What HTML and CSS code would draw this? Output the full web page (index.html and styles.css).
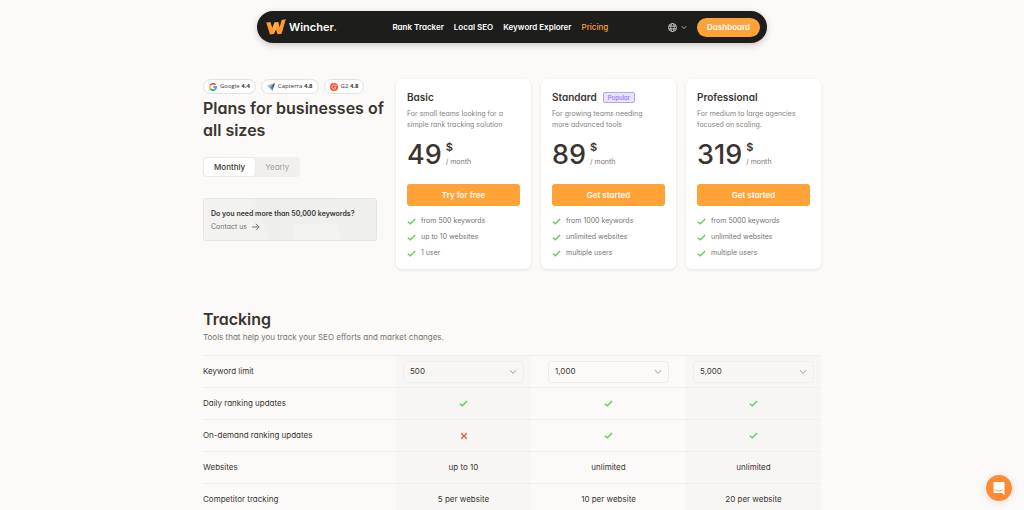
FILE: index.html
```
<!DOCTYPE html>
<html lang="en">
<head>
  <meta charset="UTF-8">
  <meta name="viewport" content="width=device-width, initial-scale=1.0">
  <title>Pricing - Wincher</title>
  <link rel="stylesheet" href="styles.css">
</head>
<body>

<!-- Shared icons -->
<svg class="sprite" aria-hidden="true">
  <symbol id="check" viewBox="0 0 10 8">
    <path d="M.8 4.2 3.6 6.6 9.2 1.2" fill="none" stroke="currentColor" stroke-width="1.6"/>
  </symbol>
  <symbol id="cross" viewBox="0 0 8 8">
    <path d="M1.2 1.2 6.8 6.8M6.8 1.2 1.2 6.8" fill="none" stroke="currentColor" stroke-width="1.4"/>
  </symbol>
  <symbol id="chevron" viewBox="0 0 8 6">
    <path d="M1 1.2 4 4.4 7 1.2" fill="none" stroke="currentColor" stroke-width="1"/>
  </symbol>
</svg>

<header class="navbar">
  <a class="logo" href="#" aria-label="Wincher">
    <svg width="20" height="16" viewBox="0 0 20 16" aria-hidden="true">
      <path d="M.2 3.4 4.4 3 6.4 9 8.6 3.6 12.4 3.2 13.6 8.4 15.6 1 19.8.2 15.6 14.8 11.6 15.2 10 10.6 7.8 15 4 15.4z" fill="#ff9a2e"/>
      <path d="M8.6 3.6 12.4 3.2 7.8 15 6.4 9z" fill="#ffab48"/>
    </svg>
    <span class="logo-text">Wincher<span class="dot">.</span></span>
  </a>
  <nav class="menu">
    <a href="#">Rank Tracker</a>
    <a href="#">Local SEO</a>
    <a href="#">Keyword Explorer</a>
    <a href="#" class="active">Pricing</a>
  </nav>
  <div class="nav-right">
    <button class="language" type="button" aria-label="Language">
      <svg width="9" height="9" viewBox="0 0 9 9" fill="none" stroke="currentColor" stroke-width=".8" aria-hidden="true">
        <circle cx="4.5" cy="4.5" r="4"/>
        <ellipse cx="4.5" cy="4.5" rx="1.8" ry="4"/>
        <path d="M.7 3.2H8.3M.7 5.8H8.3"/>
      </svg>
      <svg width="6" height="5" aria-hidden="true"><use href="#chevron"/></svg>
    </button>
    <a class="dashboard" href="#">Dashboard</a>
  </div>
</header>

<main class="container">
  <section class="plans">
    <div class="intro">
      <div class="ratings">
        <a class="rating" href="#">
          <svg width="8" height="8" viewBox="0 0 16 16" fill="none" stroke-width="3.2" aria-hidden="true">
            <path d="M13 3.6A6.4 6.4 0 0 0 2.6 4.6" stroke="#ea4335"/>
            <path d="M2.6 4.6A6.4 6.4 0 0 0 2.6 11.4" stroke="#fbbc05"/>
            <path d="M2.6 11.4A6.4 6.4 0 0 0 12.4 12.6" stroke="#34a853"/>
            <path d="M12.4 12.6A6.4 6.4 0 0 0 14.4 8H8.4" stroke="#4285f4"/>
          </svg>
          <span>Google <b>4.4</b></span>
        </a>
        <a class="rating" href="#">
          <svg width="8" height="8" viewBox="0 0 16 16" aria-hidden="true">
            <path d="M0 5 10.6 4.2 16 0z" fill="#ff9d28"/>
            <path d="M0 5 10.6 4.2V16z" fill="#68c5ed"/>
            <path d="M16 0 10.6 16V4.2z" fill="#044d80"/>
            <path d="M7.4 8.6 10.6 4.2 9 12.6z" fill="#e54747"/>
          </svg>
          <span>Capterra <b>4.8</b></span>
        </a>
        <a class="rating" href="#">
          <svg width="8" height="8" viewBox="0 0 16 16" aria-hidden="true">
            <circle cx="8" cy="8" r="8" fill="#ff492c"/>
            <path d="M10.4 4.6A4.2 4.2 0 1 0 11.6 10.2L10.6 8.4H8" fill="none" stroke="#fff" stroke-width="1.6"/>
            <path d="M11 3.6h2L11 6.2h2.2" fill="none" stroke="#fff" stroke-width=".9"/>
          </svg>
          <span>G2 <b>4.8</b></span>
        </a>
      </div>
      <h1>Plans for businesses of all sizes</h1>
      <div class="period">
        <button type="button" class="selected">Monthly</button>
        <button type="button">Yearly</button>
      </div>
      <div class="more">
        <svg class="more-art" viewBox="0 0 174 43" preserveAspectRatio="none" aria-hidden="true">
          <path d="M0 0H50L66 43H0z" fill="#f2f2f1"/>
          <path d="M90 43V29q0-3 3-3h38q3 0 4 3l4 14z" fill="#f3f3f2"/>
        </svg>
        <p>Do you need more than 50,000 keywords?</p>
        <a href="#">Contact us
          <svg width="8" height="8" viewBox="0 0 8 8" fill="none" stroke="currentColor" stroke-width="1" aria-hidden="true">
            <path d="M0 4H7M4 .8 7.2 4 4 7.2"/>
          </svg>
        </a>
      </div>
    </div>

    <div class="cards">
      <article class="card">
        <h2>Basic</h2>
        <p class="desc">For small teams looking for a simple rank tracking solution</p>
        <div class="price">
          <span class="amount">49</span>
          <span class="unit"><b>$</b><span>/ month</span></span>
        </div>
        <button type="button" class="btn">Try for free</button>
        <ul>
          <li><svg width="9" height="7"><use href="#check"/></svg>from 500 keywords</li>
          <li><svg width="9" height="7"><use href="#check"/></svg>up to 10 websites</li>
          <li><svg width="9" height="7"><use href="#check"/></svg>1 user</li>
        </ul>
      </article>

      <article class="card">
        <h2>Standard <span class="badge">Popular</span></h2>
        <p class="desc">For growing teams needing more advanced tools</p>
        <div class="price">
          <span class="amount">89</span>
          <span class="unit"><b>$</b><span>/ month</span></span>
        </div>
        <button type="button" class="btn">Get started</button>
        <ul>
          <li><svg width="9" height="7"><use href="#check"/></svg>from 1000 keywords</li>
          <li><svg width="9" height="7"><use href="#check"/></svg>unlimited websites</li>
          <li><svg width="9" height="7"><use href="#check"/></svg>multiple users</li>
        </ul>
      </article>

      <article class="card">
        <h2>Professional</h2>
        <p class="desc">For medium to large agencies focused on scaling.</p>
        <div class="price">
          <span class="amount">319</span>
          <span class="unit"><b>$</b><span>/ month</span></span>
        </div>
        <button type="button" class="btn">Get started</button>
        <ul>
          <li><svg width="9" height="7"><use href="#check"/></svg>from 5000 keywords</li>
          <li><svg width="9" height="7"><use href="#check"/></svg>unlimited websites</li>
          <li><svg width="9" height="7"><use href="#check"/></svg>multiple users</li>
        </ul>
      </article>
    </div>
  </section>

  <section class="tracking">
    <h2>Tracking</h2>
    <p class="lead">Tools that help you track your SEO efforts and market changes.</p>
    <table>
      <colgroup>
        <col class="col-name">
        <col class="col-plan">
        <col class="col-middle">
        <col class="col-plan">
      </colgroup>
      <tbody>
        <tr>
          <th scope="row">Keyword limit</th>
          <td>
            <div class="select">
              <select aria-label="Basic keyword limit"><option>500</option></select>
              <svg width="8" height="6" aria-hidden="true"><use href="#chevron"/></svg>
            </div>
          </td>
          <td>
            <div class="select">
              <select aria-label="Standard keyword limit"><option>1,000</option></select>
              <svg width="8" height="6" aria-hidden="true"><use href="#chevron"/></svg>
            </div>
          </td>
          <td>
            <div class="select">
              <select aria-label="Professional keyword limit"><option>5,000</option></select>
              <svg width="8" height="6" aria-hidden="true"><use href="#chevron"/></svg>
            </div>
          </td>
        </tr>
        <tr>
          <th scope="row">Daily ranking updates</th>
          <td><svg class="yes" width="9" height="7"><use href="#check"/></svg></td>
          <td><svg class="yes" width="9" height="7"><use href="#check"/></svg></td>
          <td><svg class="yes" width="9" height="7"><use href="#check"/></svg></td>
        </tr>
        <tr>
          <th scope="row">On-demand ranking updates</th>
          <td><svg class="no" width="8" height="8"><use href="#cross"/></svg></td>
          <td><svg class="yes" width="9" height="7"><use href="#check"/></svg></td>
          <td><svg class="yes" width="9" height="7"><use href="#check"/></svg></td>
        </tr>
        <tr>
          <th scope="row">Websites</th>
          <td>up to 10</td>
          <td>unlimited</td>
          <td>unlimited</td>
        </tr>
        <tr>
          <th scope="row">Competitor tracking</th>
          <td>5 per website</td>
          <td>10 per website</td>
          <td>20 per website</td>
        </tr>
      </tbody>
    </table>
  </section>
</main>

<button class="chat" type="button" aria-label="Open chat">
  <svg width="12" height="13" viewBox="0 0 12 13" aria-hidden="true">
    <path d="M1.5 0h9q1 0 1 1v12L9 11H1.5q-1 0-1-1V1q0-1 1-1z" fill="#fff"/>
    <path d="M2.4 7.8Q6 10.4 9.6 7.8" fill="none" stroke="#ff8a34" stroke-width=".9"/>
  </svg>
</button>

</body>
</html>
```
FILE: styles.css
```
/* General */
* {
  box-sizing: border-box;
}

body {
  margin: 0;
  padding-top: 11px;
  background: #fbfaf8;
  color: #3a3530;
  font-family: Inter, "Liberation Sans", sans-serif;
  font-feature-settings: "cv11";
  font-size: 8px;
  line-height: 11px;
}

h1, h2, p, ul {
  margin: 0;
  padding: 0;
}

a {
  color: inherit;
  text-decoration: none;
}

button, select {
  font: inherit;
  font-feature-settings: inherit;
  color: inherit;
  border: none;
  cursor: pointer;
}

svg {
  flex-shrink: 0;
}

.sprite {
  display: none;
}

/* Navbar */
.navbar {
  display: flex;
  align-items: center;
  justify-content: space-between;
  max-width: 510px;
  height: 32px;
  margin: 0 auto;
  padding: 0 7px 0 9px;
  border-radius: 16px;
  background: #1d1d1b;
  color: #fff;
  box-shadow: 0 2px 6px rgba(60, 40, 30, 0.25);
}

.logo {
  display: flex;
  align-items: center;
  gap: 3px;
}

.logo-text {
  font-size: 11px;
  font-weight: 600;
  line-height: 16px;
}

.dot {
  color: #ffa238;
}

.menu {
  display: flex;
  gap: 10px;
  margin-right: 4px;
  font-weight: 600;
}

.menu .active {
  color: #ffa238;
  font-weight: 500;
}

.nav-right {
  display: flex;
  align-items: center;
  gap: 10px;
}

.language {
  display: flex;
  align-items: center;
  gap: 4px;
  padding: 0;
  background: none;
  color: #ddd;
}

.dashboard {
  padding: 4px 10px;
  border-radius: 10px;
  background: #ffa238;
  font-weight: 600;
}

/* Plans */
.container {
  max-width: 618px;
  margin: 36px auto 0;
}

.plans {
  display: grid;
  grid-template-columns: 193px 1fr;
}

.ratings {
  display: flex;
  gap: 5px;
}

.rating {
  display: flex;
  align-items: center;
  gap: 3px;
  height: 15px;
  padding: 0 5px;
  border: 1px solid #e4e1de;
  border-radius: 8px;
  background: #fff;
  font-family: "Open Sans", sans-serif;
  font-size: 6px;
}

h1 {
  margin-top: 3px;
  font-size: 16px;
  font-weight: 600;
  line-height: 22px;
}

.period {
  display: inline-flex;
  margin-top: 16px;
  padding: 1px;
  border-radius: 4px;
  background: #f1f0ef;
}

.period button {
  height: 18px;
  padding: 0 10px;
  border-radius: 3px;
  background: none;
  color: #a19e9b;
}

.period .selected {
  background: #fff;
  color: #3a3530;
  font-weight: 500;
  box-shadow: 0 0 2px rgba(0, 0, 0, 0.1);
}

.more {
  position: relative;
  height: 43px;
  margin: 21px 19px 0 0;
  padding: 9px 7px;
  border: 1px solid #e6e5e4;
  border-radius: 3px;
  background: linear-gradient(to right, #eeeeed, #f0f0ef);
  overflow: hidden;
}

.more-art {
  position: absolute;
  inset: 0;
  width: 100%;
  height: 100%;
}

.more p {
  position: relative;
  font-size: 7px;
  font-weight: 600;
}

.more a {
  position: relative;
  display: flex;
  align-items: center;
  gap: 5px;
  margin-top: 2px;
  color: #77736f;
  font-size: 7px;
}

.cards {
  display: grid;
  grid-template-columns: repeat(3, 1fr);
  gap: 10px;
}

.card {
  padding: 11px 11px 8px;
  border-radius: 6px;
  background: #fff;
  box-shadow: 0 1px 3px rgba(60, 40, 20, 0.1);
}

.card h2 {
  display: flex;
  align-items: center;
  gap: 6px;
  font-size: 10px;
  font-weight: 600;
  line-height: 14px;
}

.badge {
  padding: 0 4px;
  border: 1px solid #b7a3f5;
  border-radius: 2px;
  background: #e9e3fd;
  color: #8f73ee;
  font-size: 6px;
  font-weight: 500;
  line-height: 9px;
}

.desc {
  margin-top: 4px;
  padding-right: 10px;
  color: #85817e;
  font-size: 7px;
}

.price {
  display: flex;
  gap: 4px;
  margin-top: 10px;
}

.amount {
  font-size: 27px;
  font-weight: 500;
  line-height: 30px;
}

.unit {
  display: flex;
  flex-direction: column;
  gap: 2px;
  color: #77736f;
  font-size: 7px;
}

.unit b {
  color: #3a3530;
  font-size: 11px;
  font-weight: 600;
  line-height: 14px;
}

.btn {
  width: 100%;
  height: 22px;
  margin-top: 14px;
  border-radius: 3px;
  background: #ffa238;
  color: #fff;
  font-weight: 600;
}

.card ul {
  margin-top: 7px;
  list-style: none;
  color: #77736f;
  font-size: 7px;
}

.card li {
  display: flex;
  align-items: center;
  gap: 5px;
  line-height: 16px;
}

.card li svg, .yes {
  color: #5fcf5b;
}

.no {
  color: #f4504e;
}

/* Tracking */
.tracking {
  margin-top: 39px;
}

.tracking h2 {
  font-size: 16px;
  font-weight: 600;
  line-height: 22px;
}

.lead {
  margin-top: 2px;
  color: #77736f;
}

table {
  width: 100%;
  margin-top: 12px;
  border-collapse: collapse;
  table-layout: fixed;
}

.col-name {
  width: 193px;
}

.col-middle {
  width: 155px;
}

th, td {
  height: 32px;
  padding: 0;
  border-top: 1px solid #f0efed;
  text-align: center;
}

th {
  font-weight: 400;
  text-align: left;
}

td:nth-child(even) {
  background: #f7f6f4;
}

td svg {
  vertical-align: middle;
}

.select {
  position: relative;
  max-width: 121px;
  margin: 0 auto;
}

.select select {
  display: block;
  width: 100%;
  height: 22px;
  padding: 0 6px;
  border: 1px solid #efedeb;
  border-radius: 3px;
  background: transparent;
  appearance: none;
}

.select svg {
  position: absolute;
  top: 8px;
  right: 7px;
  color: #9c9996;
  pointer-events: none;
}

/* Chat button */
.chat {
  position: fixed;
  right: 12px;
  bottom: 9px;
  display: flex;
  align-items: center;
  justify-content: center;
  width: 26px;
  height: 26px;
  padding: 0;
  border-radius: 50%;
  background: #ff8a34;
  box-shadow: 0 1px 8px rgba(0, 0, 0, 0.12);
}
```
